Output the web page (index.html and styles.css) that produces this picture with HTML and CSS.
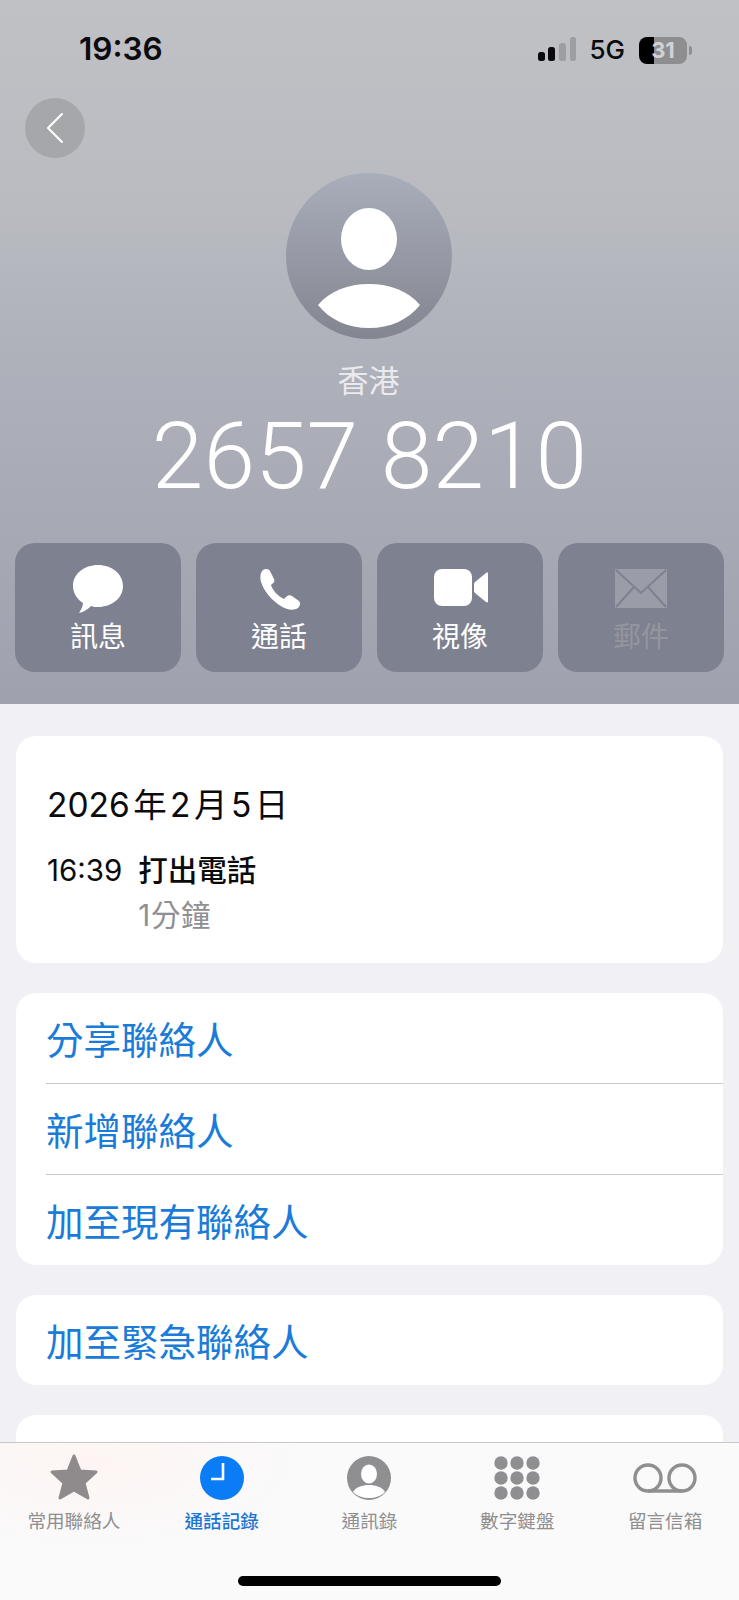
FILE: index.html
```html
<!DOCTYPE html>
<html lang="zh-Hant">
<head>
<meta charset="utf-8">
<title>2657 8210</title>
<link rel="stylesheet" href="styles.css">
</head>
<body>
<div class="screen">
  <header class="hero">
    <div class="status">
      <span class="time">19:36</span>
      <div class="status-right">
        <svg class="signal" width="38" height="25" viewBox="0 0 38 25"><rect x="0" y="15" width="7" height="9" rx="2.5" fill="#0b0b0d"/><rect x="10" y="10" width="7" height="14" rx="2.5" fill="#0b0b0d"/><rect x="21" y="6" width="7" height="18" rx="2.5" fill="#9d9ea2"/><rect x="32" y="0" width="6" height="24" rx="2.5" fill="#9d9ea2"/></svg>
        <span class="net">5G</span>
        <div class="battery"><span class="battery-num">31</span></div>
        <span class="battery-nub"></span>
      </div>
    </div>
    <button class="back" aria-label="返回">
      <svg width="20" height="32" viewBox="0 0 20 32" fill="none"><path d="M17 2 3 16l14 14" stroke="#fff" stroke-width="2.1" stroke-linecap="round" stroke-linejoin="round"/></svg>
    </button>
    <div class="avatar">
      <svg width="166" height="166" viewBox="0 0 166 166"><ellipse cx="83" cy="66" rx="28" ry="31" fill="#fff"/><path d="M32 132C44 118 62 111 83 111s39 7 51 21C122 147 104 155 83 155S44 147 32 132Z" fill="#fff"/></svg>
    </div>
    <div class="region">香港</div>
    <div class="number">2657 8210</div>
    <div class="actions">
      <div class="action">
        <svg class="action-icon" width="54" height="50" viewBox="0 0 54 50"><path d="M27 1c14 0 25 9 25 21S41 43 27 43c-2 0-5 0-7 -1-3 3-7 6-12 7 2-3 4-7 4-10C6 35 2 29 2 22 2 10 13 1 27 1Z" fill="#fff"/></svg>
        <span>訊息</span>
      </div>
      <div class="action">
        <svg class="action-icon" width="54" height="50" viewBox="0 0 54 50"><g transform="translate(6 4)"><path d="M5 2C8 0 11 1 12 3l4 8c1 2 0 4-2 5l-1 1c2 6 7 11 13 14l2-2c2-2 4-2 6-1l7 5c2 2 1 5-1 7-3 2-7 2-11 1C18 37 7 26 3 14 2 9 2 5 5 2Z" fill="#fff"/></g></svg>
        <span>通話</span>
      </div>
      <div class="action">
        <svg class="action-icon" width="56" height="50" viewBox="-2 0 56 50"><rect x="0" y="5" width="38" height="37" rx="8" fill="#fff"/><path d="M41 18 52 9c2-1 3 0 3 2v25c0 2-1 3-3 2L41 29c-1-1-1-2-1-3v-5c0-1 0-2 1-3Z" fill="#fff"/></svg>
        <span>視像</span>
      </div>
      <div class="action action-off">
        <svg class="action-icon" width="54" height="50" viewBox="0 0 54 50"><rect x="1" y="5" width="52" height="39" fill="#9a9ca8"/><path d="M2 6 27 29 52 6M2 43 20 23M52 43 34 23" fill="none" stroke="#7e8190" stroke-width="2"/></svg>
        <span>郵件</span>
      </div>
    </div>
  </header>

  <main class="content">
    <section class="card log">
      <div class="log-date">2026 年 2 月 5 日</div>
      <div class="log-row">
        <span class="log-time">16:39</span>
        <div class="log-detail">
          <div class="log-type">打出電話</div>
          <div class="log-dur">1分鐘</div>
        </div>
      </div>
    </section>
    <section class="card">
      <div class="link-row">分享聯絡人</div>
      <div class="link-row">新增聯絡人</div>
      <div class="link-row">加至現有聯絡人</div>
    </section>
    <section class="card">
      <div class="link-row">加至緊急聯絡人</div>
    </section>
    <section class="card card-cut"></section>
  </main>

  <nav class="tabbar">
    <div class="tabs">
      <div class="tab">
        <svg class="tab-icon" width="52" height="48" viewBox="0 0 52 48"><path d="M26 3 32 18 48 19 36 30 40 45 26 37 12 45 16 30 4 19 20 18Z" fill="#8f8a8b" stroke="#8f8a8b" stroke-width="3" stroke-linejoin="round"/></svg>
        <span>常用聯絡人</span>
      </div>
      <div class="tab tab-on">
        <svg class="tab-icon" width="52" height="48" viewBox="0 0 52 48"><circle cx="26" cy="25" r="22" fill="#0a7cf5"/><path d="M27 10V26H15" fill="none" stroke="#fff" stroke-width="2.6"/></svg>
        <span>通話記錄</span>
      </div>
      <div class="tab">
        <svg class="tab-icon" width="52" height="48" viewBox="0 0 52 48"><circle cx="26" cy="25" r="22" fill="#8f8f92"/><ellipse cx="26" cy="21" rx="8" ry="9.5" fill="#fff"/><path d="M10 39c3-5 9-7 16-7s13 2 16 7c-4 4-10 6-16 6s-12-2-16-6Z" fill="#fff"/></svg>
        <span>通訊錄</span>
      </div>
      <div class="tab">
        <svg class="tab-icon" width="52" height="48" viewBox="0 0 52 48" fill="#8f8f92"><circle cx="10" cy="10" r="6.7"/><circle cx="26" cy="10" r="6.7"/><circle cx="42" cy="10" r="6.7"/><circle cx="10" cy="25" r="6.7"/><circle cx="26" cy="25" r="6.7"/><circle cx="42" cy="25" r="6.7"/><circle cx="10" cy="40" r="6.7"/><circle cx="26" cy="40" r="6.7"/><circle cx="42" cy="40" r="6.7"/></svg>
        <span>數字鍵盤</span>
      </div>
      <div class="tab">
        <svg class="tab-icon" width="66" height="48" viewBox="0 0 66 48" fill="none" stroke="#8f8f92" stroke-width="3.4"><circle cx="16" cy="25" r="13"/><circle cx="50" cy="25" r="13"/><path d="M16 38H50"/></svg>
        <span>留言信箱</span>
      </div>
    </div>
    <div class="home-bar"></div>
  </nav>
</div>
</body>
</html>
```
FILE: styles.css
```css
* { box-sizing: border-box; }
html, body { margin: 0; padding: 0; }
body {
  width: 739px;
  height: 1600px;
  overflow: hidden;
  background: #f0f0f5;
  font-family: Inter, "Noto Sans CJK TC", sans-serif;
  color: #0b0b0d;
}
.screen { position: relative; width: 739px; height: 1600px; overflow: hidden; }

.hero {
  height: 704px;
  background: linear-gradient(180deg, #c0c1c5 0%, #b9bbc1 30%, #aeb0ba 52%, #9fa1ae 100%);
  display: flex;
  flex-direction: column;
  align-items: center;
}
.status {
  align-self: stretch;
  height: 98px;
  padding: 31px 47px 0 79px;
  display: flex;
  justify-content: space-between;
  align-items: flex-start;
}
.time { font-size: 31.5px; line-height: 36px; font-weight: 600; }
.status-right { display: flex; align-items: center; height: 36px; margin-top: 1px; }
.signal { margin-right: 13px; margin-bottom: 2px; }
.net { font-size: 26px; font-weight: 500; line-height: 36px; margin-right: 14px; }
.battery {
  width: 48px;
  height: 27px;
  border-radius: 8px;
  background: linear-gradient(90deg, #000 31%, #8e8e91 31%);
  display: flex;
  align-items: center;
  justify-content: center;
}
.battery-num { font-size: 22px; font-weight: 700; color: #d2d2d4; }
.battery-nub { width: 3px; height: 9px; margin-left: 2px; border-radius: 0 3px 3px 0; background: #8e8e91; }

.back {
  align-self: flex-start;
  margin-left: 25px;
  width: 60px;
  height: 60px;
  padding: 0;
  border: 0;
  border-radius: 50%;
  background: #a6a7ab;
  display: flex;
  align-items: center;
  justify-content: center;
}
.avatar {
  margin-top: 15px;
  margin-right: 2px;
  width: 166px;
  height: 166px;
  border-radius: 50%;
  background: linear-gradient(180deg, #a9aebb 0%, #83858f 100%);
}
.avatar svg { display: block; }
.region { margin-top: 20px; margin-right: 2px; font-size: 31px; line-height: 44px; color: #e9eaee; }
.number { margin-top: 4px; font-family: Roboto, sans-serif; font-size: 93px; line-height: 100px; font-weight: 300; color: #fff; }
.actions {
  align-self: stretch;
  margin-top: 36px;
  padding: 0 15px;
  display: grid;
  grid-template-columns: repeat(4, 1fr);
  gap: 15px;
}
.action {
  height: 129px;
  border-radius: 20px;
  background: #7e8190;
  color: #fff;
  font-size: 28px;
  line-height: 40px;
  display: flex;
  flex-direction: column;
  align-items: center;
  padding-top: 21px;
  gap: 3px;
}
.action-icon { display: block; }
.action-off { color: #94969f; }

.content { padding: 32px 16px 0; display: flex; flex-direction: column; gap: 30px; }
.card { background: #fff; border-radius: 20px; flex: none; }
.card-cut { height: 120px; }
.log { height: 227px; padding: 46px 31px 0; }
.log-date { font-size: 33.5px; line-height: 46px; word-spacing: -6px; }
.log-row { margin-top: 20px; display: flex; gap: 16px; }
.log-time { font-size: 29.5px; line-height: 44px; }
.log-type { font-size: 29.5px; line-height: 44px; font-weight: 500; }
.log-dur { font-size: 29.5px; line-height: 44px; color: #8f8f93; margin-top: 1px; letter-spacing: 0.6px; }
.link-row {
  height: 91px;
  margin-left: 30px;
  font-size: 37.5px;
  line-height: 96px;
  color: #1a7bd8;
  border-bottom: 1px solid #c9c9cc;
}
.link-row:last-child { height: 90px; border-bottom: 0; }

.tabbar {
  position: absolute;
  left: 0;
  right: 0;
  bottom: 0;
  height: 158px;
  border-top: 1px solid #c8c8cb;
  background: radial-gradient(ellipse 220px 90px at 90px 20px, #fdf5f3 0%, rgba(250,250,252,0) 100%), #fafafb;
  display: flex;
  flex-direction: column;
  align-items: center;
}
.tabs { align-self: stretch; display: grid; grid-template-columns: repeat(5, 1fr); padding-top: 10px; }
.tab {
  display: flex;
  flex-direction: column;
  align-items: center;
  font-size: 18.6px;
  line-height: 28px;
  color: #8f8f92;
  gap: 6px;
}
.tab-icon { display: block; }
.tab-on { color: #1a76d2; font-weight: 500; }
.home-bar { margin-top: 41px; width: 263px; height: 10px; border-radius: 5px; background: #000; }
```
